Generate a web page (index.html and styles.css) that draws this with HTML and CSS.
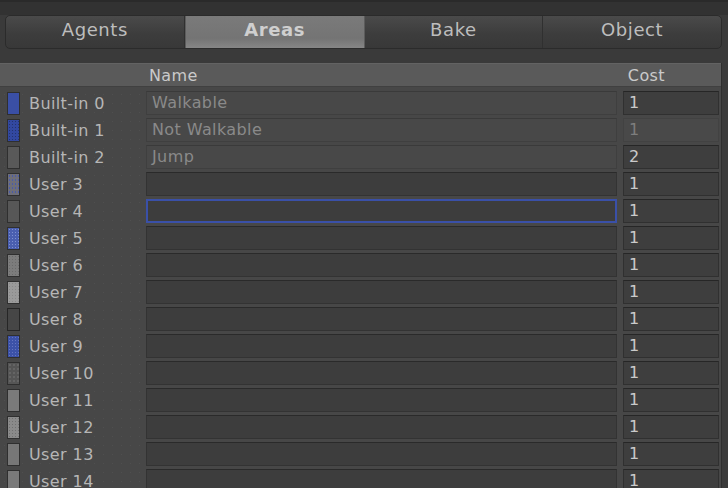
FILE: index.html
```html
<!DOCTYPE html>
<html>
<head>
<meta charset="utf-8">
<link rel="stylesheet" href="styles.css">
</head>
<body>
<div class="top"></div>
<div class="tabbar">
  <div class="tab">Agents</div>
  <div class="tab active">Areas</div>
  <div class="tab">Bake</div>
  <div class="tab last">Object</div>
</div>
<div class="gap"></div>
<div class="panel">
  <div class="header">
    <span class="h-name">Name</span>
    <span class="h-cost">Cost</span>
  </div>
  <div class="rows">
    <div class="row"><span class="sw sw0"></span><span class="label">Built-in 0</span><div class="field builtin">Walkable</div><div class="cost">1</div></div>
    <div class="row"><span class="sw sw1"></span><span class="label">Built-in 1</span><div class="field builtin">Not Walkable</div><div class="cost disabled">1</div></div>
    <div class="row"><span class="sw sw2"></span><span class="label">Built-in 2</span><div class="field builtin">Jump</div><div class="cost">2</div></div>
    <div class="row"><span class="sw sw3"></span><span class="label">User 3</span><div class="field"></div><div class="cost">1</div></div>
    <div class="row"><span class="sw sw4"></span><span class="label">User 4</span><div class="field focus"></div><div class="cost">1</div></div>
    <div class="row"><span class="sw sw5"></span><span class="label">User 5</span><div class="field"></div><div class="cost">1</div></div>
    <div class="row"><span class="sw sw6"></span><span class="label">User 6</span><div class="field"></div><div class="cost">1</div></div>
    <div class="row"><span class="sw sw7"></span><span class="label">User 7</span><div class="field"></div><div class="cost">1</div></div>
    <div class="row"><span class="sw sw8"></span><span class="label">User 8</span><div class="field"></div><div class="cost">1</div></div>
    <div class="row"><span class="sw sw9"></span><span class="label">User 9</span><div class="field"></div><div class="cost">1</div></div>
    <div class="row"><span class="sw sw10"></span><span class="label">User 10</span><div class="field"></div><div class="cost">1</div></div>
    <div class="row"><span class="sw sw11"></span><span class="label">User 11</span><div class="field"></div><div class="cost">1</div></div>
    <div class="row"><span class="sw sw12"></span><span class="label">User 12</span><div class="field"></div><div class="cost">1</div></div>
    <div class="row"><span class="sw sw13"></span><span class="label">User 13</span><div class="field"></div><div class="cost">1</div></div>
    <div class="row"><span class="sw sw14"></span><span class="label">User 14</span><div class="field"></div><div class="cost">1</div></div>
  </div>
</div>
</body>
</html>
```
FILE: styles.css
```css
* { box-sizing: border-box; }
html, body {
  margin: 0;
  padding: 0;
  width: 728px;
  height: 488px;
  overflow: hidden;
  background: #3a3a3a;
  font-family: "DejaVu Sans", Verdana, sans-serif;
}
.top {
  height: 15px;
  background: #323232;
  border-top: 2px solid #2a2a2a;
}
.tabbar {
  margin: 0 6px 0 5px;
  height: 34px;
  display: flex;
  border: 1px solid #2b2b2b;
  border-radius: 5px;
  overflow: hidden;
  background: linear-gradient(#4a4a4a, #3d3d3d 55%, #383838);
}
.tab {
  flex: 1;
  display: flex;
  align-items: center;
  justify-content: center;
  font-size: 18px;
  letter-spacing: 0.6px;
  color: #bdbdbd;
  border-right: 1px solid #303030;
  padding-bottom: 5px;
}
.tab.last { border-right: none; }
.tab.active {
  background: linear-gradient(#7a7a7a, #747474 70%, #868686);
  color: #cfcfcf;
  font-weight: bold;
  border-left: 1px solid #5c5c5c;
  border-right: 1px solid #5c5c5c;
}
.gap {
  height: 14px;
  background: #3a3a3a;
}
.panel {
  width: 722px;
  background-color: #474747;
  background-image: radial-gradient(circle, #4f4f4f 0.6px, transparent 0.9px);
  background-size: 9px 9px;
  border-right: 1px solid #2e2e2e;
  min-height: 420px;
}
.header {
  height: 24px;
  background: #5a5a5a;
  border-top: 1px solid #636363;
  border-bottom: 1px solid #404040;
  display: flex;
  align-items: center;
  font-size: 16px;
  letter-spacing: 0.4px;
  color: #cacaca;
}
.h-name { margin-left: 149px; }
.h-cost { margin-left: auto; margin-right: 56px; }
.rows {
  padding-top: 4px;
  display: flex;
  flex-direction: column;
  gap: 3px;
}
.row {
  height: 24px;
  display: flex;
  align-items: center;
}
.sw {
  width: 13px;
  height: 23px;
  margin-left: 7px;
  border: 1px solid #2f2f2f;
  background: #5a5a5a;
  flex: none;
}
.sw0 { background: #3a4fa5; }
.sw1 { background: #3248a0; background-image: radial-gradient(circle, #24336f 0.6px, transparent 1px); background-size: 3px 3px; }
.sw2 { background: #595959; }
.sw3 { background: #6e6e78; background-image: radial-gradient(circle, #4a5ba8 0.7px, transparent 1px); background-size: 3px 4px; }
.sw4 { background: #575757; }
.sw5 { background: #4a5fb0; background-image: radial-gradient(circle, #7e90d0 0.6px, transparent 1px); background-size: 3px 3px; }
.sw6 { background: #7c7c7c; background-image: radial-gradient(circle, #6a6a6a 0.6px, transparent 1px); background-size: 3px 3px; }
.sw7 { background: #9a9a9a; background-image: radial-gradient(circle, #888 0.6px, transparent 1px); background-size: 3px 3px; }
.sw8 { background: #464646; border-color: #262626; }
.sw9 { background: #3c52a8; background-image: radial-gradient(circle, #6575c0 0.6px, transparent 1px); background-size: 3px 3px; }
.sw10 { background: #555; background-image: radial-gradient(circle, #6a6a6a 0.6px, transparent 1px); background-size: 4px 4px; }
.sw11 { background: #7a7a7a; }
.sw12 { background: #8a8a8a; background-image: radial-gradient(circle, #707070 0.6px, transparent 1px); background-size: 3px 3px; }
.sw13 { background: #777; }
.sw14 { background: #7a7a7a; }
.label {
  width: 117px;
  margin-left: 9px;
  font-size: 16px;
  letter-spacing: 0.4px;
  color: #b6b6b6;
  white-space: nowrap;
  flex: none;
}
.field {
  width: 471px;
  height: 24px;
  background: #3d3d3d;
  border: 1px solid #333;
  border-top-color: #2a2a2a;
  font-size: 16px;
  letter-spacing: 0.4px;
  line-height: 22px;
  color: #8a8a8a;
  padding-left: 5px;
  flex: none;
}
.field.builtin {
  background: #484848;
  border-color: #3f3f3f;
  border-top-color: #3a3a3a;
}
.field.focus {
  border: 2px solid #3a50a8;
}
.cost {
  width: 96px;
  height: 24px;
  margin-left: 6px;
  background: #3e3e3e;
  border: 1px solid #303030;
  border-top-color: #262626;
  font-size: 16px;
  line-height: 22px;
  color: #cacaca;
  padding-left: 5px;
  flex: none;
}
.cost.disabled {
  background: #494949;
  border-color: #424242;
  color: #7e7e7e;
}
```
